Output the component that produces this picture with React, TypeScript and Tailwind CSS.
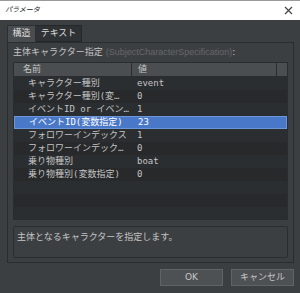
import React from "react";

const rows: { name: string; value: string }[] = [
  { name: "キャラクター種別", value: "event" },
  { name: "キャラクター種別(変…", value: "0" },
  { name: "イベントID or イベン…", value: "1" },
  { name: "イベントID(変数指定)", value: "23" },
  { name: "フォロワーインデックス", value: "1" },
  { name: "フォロワーインデック…", value: "0" },
  { name: "乗り物種別", value: "boat" },
  { name: "乗り物種別(変数指定)", value: "0" },
];

const SELECTED = 3;
const mono = { fontFamily: '"DejaVu Sans Mono", "Noto Sans CJK JP", monospace' };

export default function App() {
  const stripes = Array.from({ length: 11 }, (_, i) => i);
  return (
    <div
      className="w-[300px] h-[293px] bg-[#3c3f41] flex flex-col overflow-hidden text-[#c4c4c4]"
      style={{ fontFamily: '"DejaVu Sans", "Noto Sans CJK JP", sans-serif' }}
    >
      {/* title bar */}
      <div className="h-[20px] bg-white border-t border-[#9a9a9a] flex items-center justify-between pl-[5px] pr-[7px]">
        <span className="text-[7px] italic text-[#222]">パラメータ</span>
        <svg width="9" height="9" viewBox="0 0 9 9" className="text-[#444]">
          <path d="M1 1 L8 8 M8 1 L1 8" stroke="currentColor" strokeWidth="1.2" />
        </svg>
      </div>

      <div className="flex-1 flex flex-col pl-[7px] pr-[6px]">
        {/* tabs */}
        <div className="flex mt-[5px] h-[17px]">
          <div className="w-[29px] bg-[#4a4d50] border border-b-0 border-[#2d3032] flex items-center justify-center text-[9px] text-[#dcdcdc]">
            構造
          </div>
          <div className="w-[46px] bg-[#2f3234] border border-l-0 border-[#25282a] flex items-center justify-center text-[9px] text-[#dcdcdc]">
            テキスト
          </div>
        </div>

        {/* panel */}
        <div className="h-[221px] border border-[#2a2d2f] flex flex-col px-[5px]">
          <div className="h-[19px] flex items-center text-[9px]">
            <span>主体キャラクター指定</span>
            <span
              className="text-[#64686a] ml-[3px]"
              style={{ fontFamily: '"Liberation Sans", sans-serif' }}
            >
              (SubjectCharacterSpecification)
            </span>
            <span>:</span>
          </div>

          {/* list */}
          <div className="h-[158px] border border-[#2a2d2f] flex flex-col overflow-hidden" style={mono}>
            <div className="h-[14px] flex bg-[#4a4e50] border-b border-[#2a2d2f] text-[9px] shrink-0">
              <div className="w-[118px] pl-[9px] flex items-center border-r border-[#2a2d2f]">名前</div>
              <div className="w-[145px] pl-[6px] flex items-center border-r border-[#2a2d2f]">値</div>
              <div className="flex-1" />
            </div>
            {stripes.map((i) => {
              const r = rows[i];
              const sel = i === SELECTED;
              return (
                <div
                  key={i}
                  className={
                    "h-[13px] shrink-0 flex text-[9px] " +
                    (sel
                      ? "bg-[#4a78c8] border border-[#6d96d8] text-white"
                      : i % 2 === 0
                      ? "bg-[#2b2e30]"
                      : "bg-[#27292b]")
                  }
                >
                  {r && (
                    <>
                      <div className="w-[118px] pl-[14px] flex items-center whitespace-nowrap overflow-hidden">
                        {r.name}
                      </div>
                      <div className="pl-[5px] flex items-center">{r.value}</div>
                    </>
                  )}
                </div>
              );
            })}
          </div>

          {/* description */}
          <div className="h-[32px] mt-[6px] border border-[#2a2d2f] rounded-[2px] px-[3px] pt-[4px] text-[9px]">
            主体となるキャラクターを指定します。
          </div>
        </div>

        {/* buttons */}
        <div className="flex justify-end gap-[8px] mt-[6px]">
          <button className="w-[63px] h-[17px] bg-[#4d5153] border border-[#5f6365] text-[9px] text-[#c8c8c8]">
            OK
          </button>
          <button className="w-[63px] h-[17px] bg-[#4d5153] border border-[#5f6365] text-[9px] text-[#c8c8c8]">
            キャンセル
          </button>
        </div>
      </div>
    </div>
  );
}
